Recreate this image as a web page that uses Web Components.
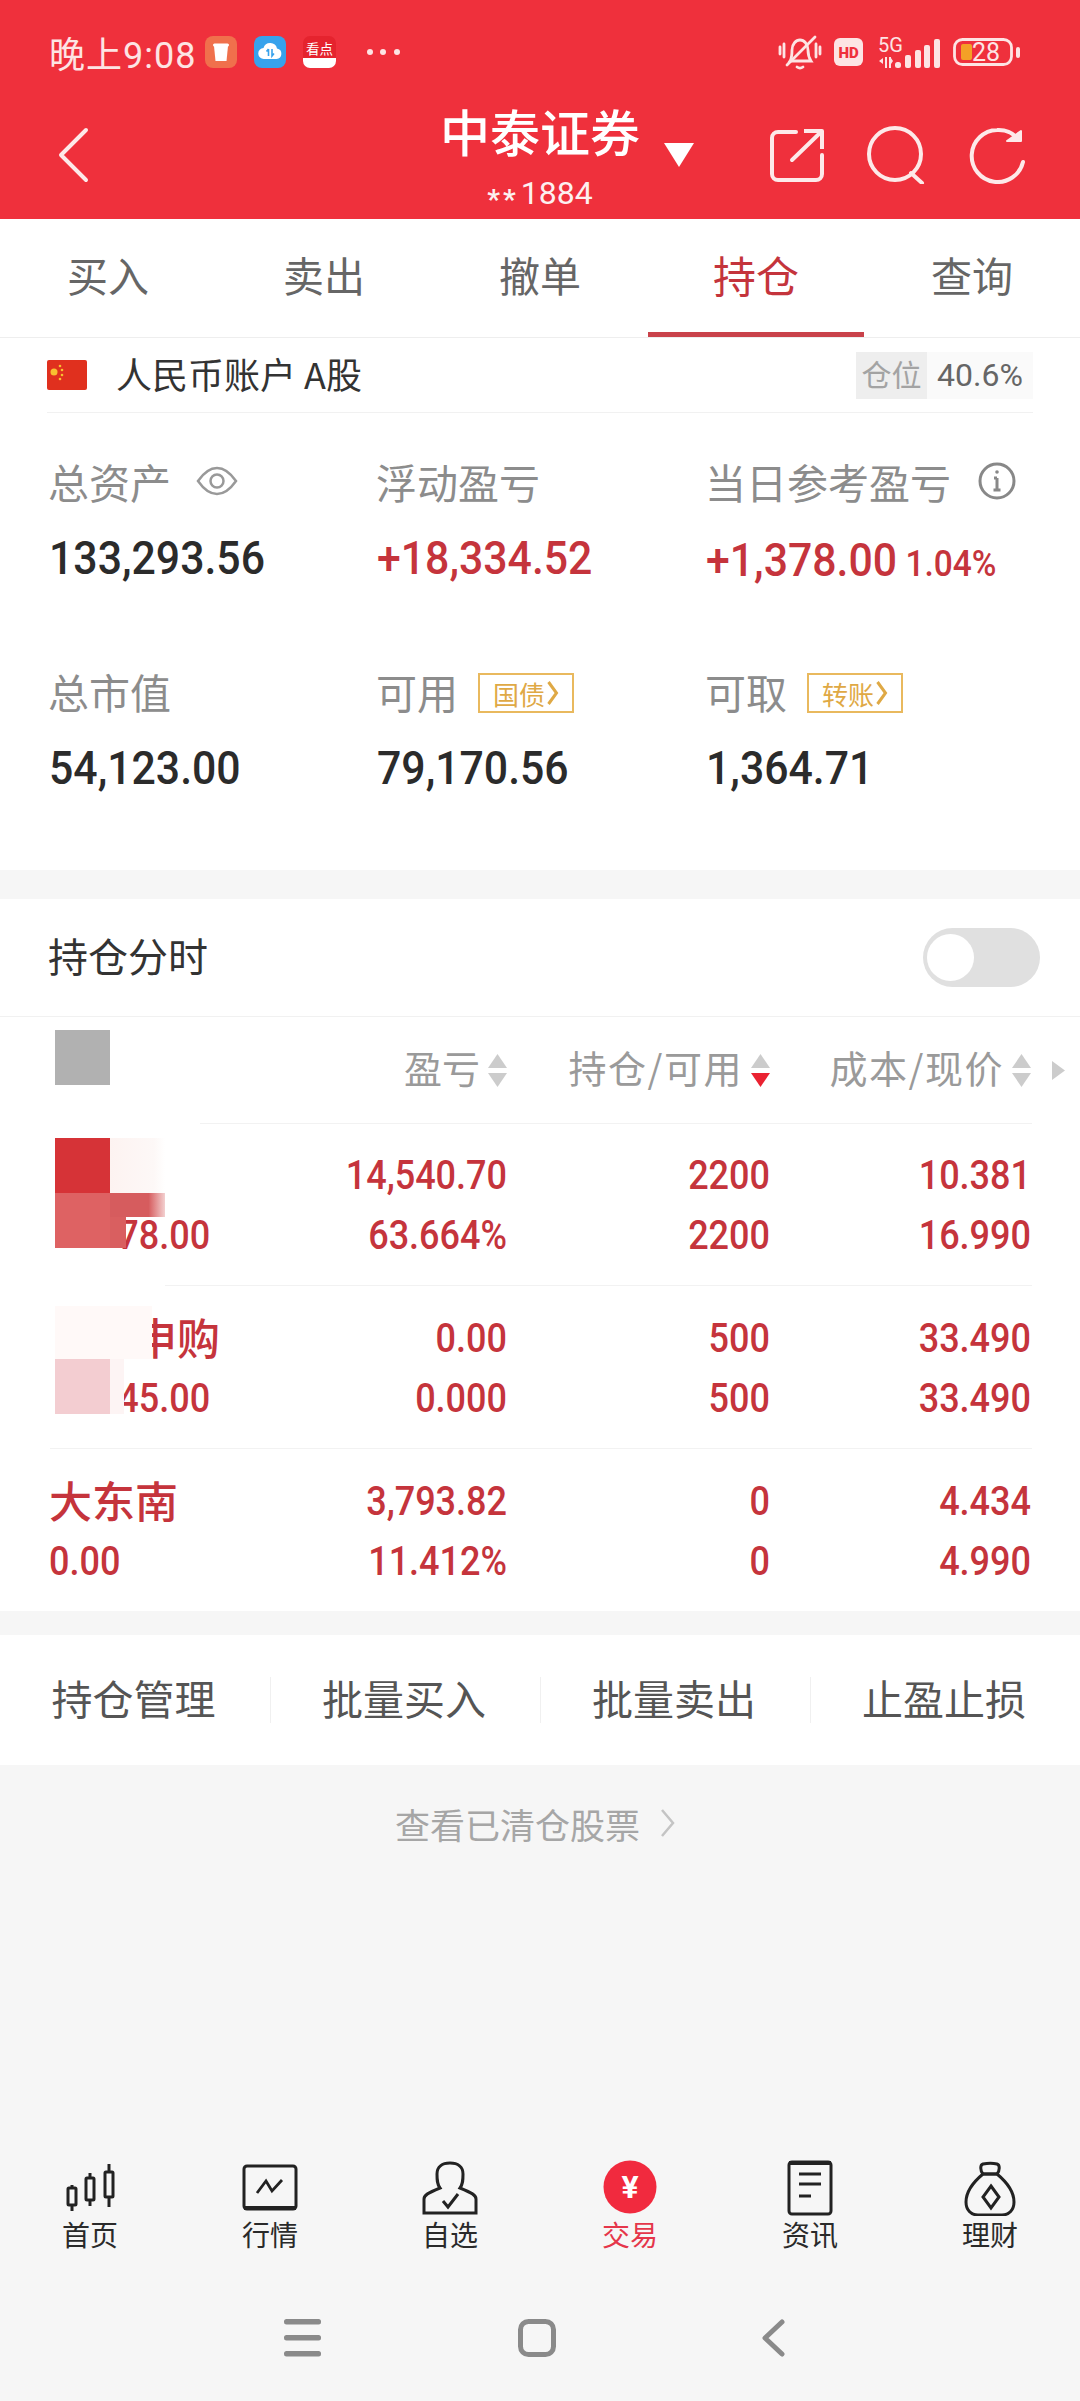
<!DOCTYPE html>
<html lang="zh">
<head>
<meta charset="utf-8">
<title>中泰证券</title>
<style>
  html, body { margin: 0; padding: 0; }
  body {
    background: #f6f6f6;
    font-family: Roboto, "Noto Sans CJK SC", sans-serif;
  }
</style>
</head>
<body>
<trade-page>
  <status-bar></status-bar>
  <app-bar></app-bar>
  <tab-strip>
    <tab-item>买入</tab-item>
    <tab-item>卖出</tab-item>
    <tab-item>撤单</tab-item>
    <tab-item active>持仓</tab-item>
    <tab-item>查询</tab-item>
  </tab-strip>
  <account-row></account-row>
  <stat-grid>
    <stat-cell label="总资产" value="133,293.56">
      <svg slot="extra" width="42" height="32" viewBox="0 0 42 32" fill="none" stroke="#999" stroke-width="2.5" style="margin-left:5px"><path d="M2 16C9 6 15 3 21 3s12 3 19 13c-7 10-13 13-19 13S9 26 2 16z"/><circle cx="21" cy="16" r="6.5"/></svg>
    </stat-cell>
    <stat-cell label="浮动盈亏" value="+18,334.52" red></stat-cell>
    <stat-cell label="当日参考盈亏" value="+1,378.00" pct="1.04%" red>
      <svg slot="extra" width="38" height="38" viewBox="0 0 38 38" fill="none" stroke="#888" stroke-width="3" style="margin-left:7px"><circle cx="19" cy="19" r="17"/><path d="M19 16v12M16 16h3M15.500 28h7"/><circle cx="19" cy="10" r="1.800" fill="#888" stroke="none"/></svg>
    </stat-cell>
    <stat-cell label="总市值" value="54,123.00"></stat-cell>
    <stat-cell label="可用" value="79,170.56"><gold-tag slot="extra">国债</gold-tag></stat-cell>
    <stat-cell label="可取" value="1,364.71"><gold-tag slot="extra">转账</gold-tag></stat-cell>
  </stat-grid>
  <holdings-card>
    <hold-head>
      <mosaic-block style="left:55px;top:13px;width:55px;height:55px;background:#b1b1b1"></mosaic-block>
    </hold-head>
    <hold-row value="78.00" value-indent="77" pl="14,540.70" rate="63.664%" qty="2200" free="2200" cost="10.381" price="16.990" line-from="165">
      <mosaic-block style="left:55px;top:15px;width:55px;height:55px;background:#d63337"></mosaic-block>
      <mosaic-block style="left:110px;top:15px;width:55px;height:55px;background:linear-gradient(90deg,#fdf3f1,#fdf8f7 80%,#fff)"></mosaic-block>
      <mosaic-block style="left:55px;top:70px;width:55px;height:55px;background:#de6263"></mosaic-block>
      <mosaic-block style="left:110px;top:70px;width:55px;height:24px;background:linear-gradient(90deg,#d65c5e,#d65c5e 70%,#f3d0d0)"></mosaic-block>
      <mosaic-block style="left:110px;top:94px;width:16px;height:31px;background:#d95f60"></mosaic-block>
    </hold-row>
    <hold-row name="申购" indent="85" value="45.00" value-indent="77" pl="0.00" rate="0.000" qty="500" free="500" cost="33.490" price="33.490" line-from="50">
      <mosaic-block style="left:55px;top:20px;width:97px;height:53px;background:#fff9f8"></mosaic-block>
      <mosaic-block style="left:55px;top:73px;width:55px;height:55px;background:#f3cdd1"></mosaic-block>
      <mosaic-block style="left:110px;top:73px;width:14px;height:55px;background:#fdf4f4"></mosaic-block>
    </hold-row>
    <hold-row name="大东南" value="0.00" pl="3,793.82" rate="11.412%" qty="0" free="0" cost="4.434" price="4.990" last></hold-row>
  </holdings-card>
  <action-bar>
    <action-item>持仓管理</action-item>
    <action-item>批量买入</action-item>
    <action-item>批量卖出</action-item>
    <action-item>止盈止损</action-item>
  </action-bar>
  <cleared-link></cleared-link>
  <bottom-nav slot="foot">
    <nav-item label="首页">
      <svg width="60" height="56" viewBox="0 0 60 56" fill="none" stroke="#222" stroke-width="3"><rect x="8" y="28" width="8" height="17" rx="1"/><path d="M12 25v3M12 45v6"/><rect x="26" y="18" width="8" height="22" rx="1"/><path d="M30 13v5M30 40v6"/><rect x="45" y="12" width="8" height="25" rx="1"/><path d="M49 4v8M49 37v10"/></svg>
    </nav-item>
    <nav-item label="行情">
      <svg width="60" height="56" viewBox="0 0 60 56" fill="none" stroke="#222" stroke-width="3"><rect x="4" y="6" width="52" height="43" rx="3"/><path d="M4 48h52" stroke-width="4"/><path d="M17 33l9-12 6 10 10-11" stroke-width="2.8"/></svg>
    </nav-item>
    <nav-item label="自选">
      <svg width="60" height="56" viewBox="0 0 60 56" fill="none" stroke="#222" stroke-width="3"><path d="M4 53V39c0-4 4-6 16-11-3-4-3-8-3-14C17 7 22 3 30 3s13 4 13 11c0 6 0 10-3 14 12 5 16 7 16 11v14z"/><path d="M23 41l5 6 10-13"/></svg>
    </nav-item>
    <nav-item label="交易" active>
      <svg width="60" height="56" viewBox="0 0 60 56"><circle cx="30" cy="27" r="26.5" fill="#f12a3e"/><text x="30" y="38" text-anchor="middle" fill="#fff" font-size="32" font-weight="700" font-family="Roboto, sans-serif">¥</text></svg>
    </nav-item>
    <nav-item label="资讯">
      <svg width="60" height="56" viewBox="0 0 60 56" fill="none" stroke="#222" stroke-width="3"><rect x="9" y="2" width="42" height="52" rx="3"/><path d="M9 3h42" stroke-width="4"/><path d="M19 14h22M19 24h22M19 36h12"/></svg>
    </nav-item>
    <nav-item label="理财">
      <svg width="60" height="56" viewBox="0 0 60 56" fill="none" stroke="#222" stroke-width="3"><path d="M23 14C11 24 6 33 6 42c0 8 5 13 12 13h24c7 0 12-5 12-13 0-9-5-18-17-28z"/><path d="M23 14c-3-4-3-9 0-10 5-1 10-1 14 0 3 1 3 6 0 10z"/><path d="M31 26l8 11-8 11-8-11z"/></svg>
    </nav-item>
  </bottom-nav>
  <system-nav slot="foot"></system-nav>
</trade-page>

<script>
class TradePage extends HTMLElement {
  constructor() {
    super();
    this.attachShadow({mode: 'open'});
    this.shadowRoot.innerHTML = `
    <style>
      :host { display: flex; flex-direction: column; min-height: 2401px; }
      #foot { display: block; margin-top: auto; }
    </style>
    <slot></slot>
    <div id="foot"><slot name="foot"></slot></div>`;
  }
}

class StatusBar extends HTMLElement {
  constructor() {
    super();
    this.attachShadow({mode: 'open'});
    this.shadowRoot.innerHTML = `
    <style>
      :host { display: flex; align-items: center; height: 104px; padding: 0 60px 0 49px; box-sizing: border-box; background: #ef303c; color: #fde4e4; }
      #time { font-size: 36px; letter-spacing: 1px; margin-right: 9px; white-space: nowrap; }
      svg { display: block; flex: none; }
      .app { margin-right: 17px; }
      #dots { margin-left: 30px; }
      #right { display: flex; align-items: center; margin-left: auto; }
    </style>
    <span id="time">晚上9:08</span>
    <svg class="app" width="32" height="32" viewBox="0 0 32 32"><rect width="32" height="32" rx="8" fill="#f0704c"/><path d="M9 10h14l-1.500 15h-11z" fill="#fff"/><rect x="8" y="7.500" width="16" height="3" rx="1.500" fill="#fff"/></svg>
    <svg class="app" width="32" height="32" viewBox="0 0 32 32"><rect width="32" height="32" rx="8" fill="#37a2ec"/><path d="M10 23a5.500 5.500 0 0 1-.5-11A7 7 0 0 1 23 12.500 5.300 5.300 0 0 1 22.500 23z" fill="#fff"/><path d="M14.500 13v7M12.500 15.500l2-2.500M18 13v7l2-2.500" stroke="#37a2ec" stroke-width="1.600" fill="none"/></svg>
    <svg class="app" width="33" height="32" viewBox="0 0 33 32" style="margin-right:0"><rect width="33" height="32" rx="7" fill="#e5232e"/><path d="M0 22h33v3a7 7 0 0 1-7 7H7a7 7 0 0 1-7-7z" fill="#fff"/><text x="16.500" y="18" text-anchor="middle" font-size="13.500" fill="#fff" font-family="Noto Sans CJK SC, sans-serif">看点</text></svg>
    <svg id="dots" width="34" height="8" viewBox="0 0 34 8" fill="#fde4e4"><circle cx="4" cy="4" r="3"/><circle cx="17" cy="4" r="3"/><circle cx="31" cy="4" r="3"/></svg>
    <div id="right">
      <svg width="44" height="37" viewBox="0 0 44 37" fill="none" stroke="#fde4e4" stroke-width="2.800" stroke-linecap="round"><path d="M2 13v7M6 10v13M38 10v13M42 13v7"/><path d="M12 27c2-3 2-6 2-11 0-6 4-10 8-10s8 4 8 10c0 5 1 8 3 11z"/><path d="M19 33c2 1.500 4 1.500 6 0"/><path d="M9 31L37 3"/></svg>
      <svg width="29" height="28" viewBox="0 0 29 28" style="margin-left:12px"><rect width="29" height="28" rx="6" fill="#fde4e4"/><text x="14.500" y="19.500" text-anchor="middle" font-size="15" font-weight="900" fill="#ef303c" font-family="Roboto, sans-serif">HD</text></svg>
      <svg width="62" height="43" viewBox="0 -6 62 43" style="margin-left:15px" fill="#fde4e4"><text x="0" y="15" font-size="20" font-family="Roboto, sans-serif">5G</text><rect x="17" y="25" width="6" height="6" rx="2.500"/><rect x="27" y="18" width="6" height="13" rx="2"/><rect x="37" y="13" width="6" height="18" rx="2"/><rect x="46" y="8" width="6" height="23" rx="2"/><rect x="56" y="2" width="6" height="29" rx="2"/><path d="M1 24l4-3v6zM7 20h2v11H7zM11 20h2v11h-2zM15 24l-2-3v6z"/></svg>
      <svg width="67" height="36" viewBox="0 -4 67 36" style="margin-left:13px"><rect x="1.500" y="1.500" width="57" height="25" rx="8" fill="none" stroke="#fde4e4" stroke-width="2.800"/><rect x="8" y="6" width="11" height="16" rx="2" fill="#f4a026"/><text x="19" y="23" font-size="25" fill="#fde4e4" font-family="Roboto, sans-serif">28</text><rect x="63" y="9" width="4" height="11" rx="2" fill="#fde4e4"/></svg>
    </div>`;
  }
}

class AppBar extends HTMLElement {
  constructor() {
    super();
    this.attachShadow({mode: 'open'});
    this.shadowRoot.innerHTML = `
    <style>
      :host { display: grid; grid-template-columns: 1fr auto 1fr; height: 115px; background: #ef303c; color: #fff; box-sizing: border-box; }
      svg { display: block; }
      #back { align-self: center; margin: 0 0 13px 57px; }
      #title { position: relative; text-align: center; }
      #name { font-size: 50px; line-height: 52px; font-weight: 500; font-family: "Noto Sans CJK SC", sans-serif; }
      #sub { font-size: 32px; line-height: 36px; margin-top: 19px; color: #fdf0f0; white-space: nowrap; }
      #sub i { font-style: normal; font-size: 28px; font-weight: 700; letter-spacing: 3px; margin-right: 2px; vertical-align: -5px; }
      #drop { position: absolute; left: 224px; top: 39px; }
      #tools { display: flex; align-items: center; justify-content: flex-end; gap: 42px; padding: 0 54px 13px 0; }
    </style>
    <svg id="back" width="32" height="56" viewBox="0 0 32 56" fill="none" stroke="#fde9e9" stroke-width="4" stroke-linecap="round" stroke-linejoin="round"><path d="M29 3L4 28l25 25"/></svg>
    <div id="title">
      <div id="name">中泰证券</div>
      <div id="sub"><i>**</i>1884</div>
      <svg id="drop" width="30" height="24" viewBox="0 0 30 24"><path d="M0 0h30L15 24z" fill="#fff"/></svg>
    </div>
    <div id="tools">
      <svg width="56" height="56" viewBox="0 0 56 56" fill="none" stroke="#fde9e9" stroke-width="4" stroke-linecap="round" stroke-linejoin="round"><path d="M27 5H9a6 6 0 0 0-6 6v36a6 6 0 0 0 6 6h38a6 6 0 0 0 6-6V28"/><path d="M23 33L52 5"/><path d="M35 4h18v18" stroke-linecap="butt"/></svg>
      <svg width="60" height="58" viewBox="0 0 60 58" fill="none" stroke="#fde9e9" stroke-width="4" stroke-linecap="round"><circle cx="28" cy="28" r="26"/><path d="M44 47l11 10"/></svg>
      <svg width="57" height="57" viewBox="0 0 57 57" fill="none" stroke="#fde9e9" stroke-width="4" stroke-linecap="round"><path d="M50 13A26 26 0 0 0 28 3a26 26 0 1 0 26 32"/><path d="M38 14l14-10v10z" fill="#fde9e9" stroke="#fde9e9" stroke-width="2" stroke-linejoin="round"/></svg>
    </div>`;
  }
}

class TabStrip extends HTMLElement {
  constructor() {
    super();
    this.attachShadow({mode: 'open'});
    this.shadowRoot.innerHTML = `
    <style>
      :host { display: grid; grid-template-columns: repeat(5, 1fr); background: #fff; border-bottom: 1px solid #eee; font-family: "Noto Sans CJK SC", sans-serif; }
    </style>
    <slot></slot>`;
  }
}

class TabItem extends HTMLElement {
  constructor() {
    super();
    this.attachShadow({mode: 'open'});
    this.shadowRoot.innerHTML = `
    <style>
      :host { display: flex; align-items: center; justify-content: center; height: 118px; box-sizing: border-box; padding-bottom: 3px; border-bottom: 5px solid transparent; font-size: 41px; color: #666; }
      :host([active]) { color: #c4343c; border-bottom-color: #c9424a; font-size: 43px; }
    </style>
    <slot></slot>`;
  }
}

class AccountRow extends HTMLElement {
  constructor() {
    super();
    this.attachShadow({mode: 'open'});
    this.shadowRoot.innerHTML = `
    <style>
      :host { display: block; background: #fff; padding: 0 47px; }
      #row { display: flex; align-items: center; height: 74px; border-bottom: 1px solid #f1f1f1; }
      svg { display: block; margin-right: 29px; }
      #text { font-size: 36px; color: #333; font-family: "Noto Sans CJK SC", sans-serif; white-space: nowrap; padding-bottom: 4px; }
      #tag { display: flex; margin-left: auto; height: 47px; width: 177px; background: #fafafa; font-size: 32px; line-height: 47px; }
      #tag b { width: 71px; flex: none; font-weight: 400; font-size: 30px; text-align: center; background: #eee; color: #a3a3a3; font-family: "Noto Sans CJK SC", sans-serif; line-height: 42px; }
      #tag span { flex: 1; text-align: center; color: #666; }
    </style>
    <div id="row">
      <svg width="40" height="30" viewBox="0 0 40 30"><rect width="40" height="30" rx="2" fill="#e0301e"/><circle cx="7" cy="12" r="3.500" fill="#f8c030"/><circle cx="13" cy="6" r="1.300" fill="#f8c030"/><circle cx="15" cy="10" r="1.300" fill="#f8c030"/><circle cx="15" cy="15" r="1.300" fill="#f8c030"/><circle cx="13" cy="19" r="1.300" fill="#f8c030"/></svg>
      <span id="text">人民币账户 A股</span>
      <div id="tag"><b>仓位</b><span>40.6%</span></div>
    </div>`;
  }
}

class StatGrid extends HTMLElement {
  constructor() {
    super();
    this.attachShadow({mode: 'open'});
    this.shadowRoot.innerHTML = `
    <style>
      :host { display: grid; grid-template-columns: 328px 329px 1fr; row-gap: 83px; padding: 43px 0 77px 48px; background: #fff; }
    </style>
    <slot></slot>`;
  }
}

class StatCell extends HTMLElement {
  constructor() {
    super();
    this.attachShadow({mode: 'open'});
    const pct = this.getAttribute('pct');
    this.shadowRoot.innerHTML = `
    <style>
      :host { display: block; }
      #label { display: flex; align-items: center; gap: 20px; height: 50px; font-size: 41px; color: #8c8c8c; white-space: nowrap; font-family: "Noto Sans CJK SC", sans-serif; }
      #value { margin: 27px 0 0 1px; height: 50px; font-size: 46px; line-height: 50px; font-weight: 500; color: #2b2b2b; white-space: nowrap; transform: scaleX(.93); transform-origin: left; }
      :host([red]) #value { color: #c5343c; }
      :host([pct]) #value { margin-top: 29px; height: 48px; }
      #value small { font-size: 36px; margin-left: 9px; }
    </style>
    <div id="label"><span>${this.getAttribute('label')}</span><slot name="extra"></slot></div>
    <div id="value">${this.getAttribute('value')}${pct ? `<small>${pct}</small>` : ''}</div>`;
  }
}

class GoldTag extends HTMLElement {
  constructor() {
    super();
    this.attachShadow({mode: 'open'});
    this.shadowRoot.innerHTML = `
    <style>
      :host { display: inline-flex; align-items: center; justify-content: center; gap: 2px; width: 96px; height: 40px; box-sizing: border-box; border: 2.500px solid #e9b95e; font-size: 26px; color: #dfa945; margin-top: 4px; }
    </style>
    <slot></slot>
    <svg width="12" height="26" viewBox="0 0 12 26" fill="none" stroke="#dfa945" stroke-width="3"><path d="M1.500 2l8 11-8 11"/></svg>`;
  }
}

class HoldingsCard extends HTMLElement {
  constructor() {
    super();
    this.attachShadow({mode: 'open'});
    this.shadowRoot.innerHTML = `
    <style>
      :host { display: block; margin-top: 29px; background: #fff; }
      #top { display: flex; align-items: center; justify-content: space-between; height: 117px; padding: 0 40px 0 48px; border-bottom: 1px solid #f1f1f1; }
      #top span { font-size: 40px; color: #333; font-family: "Noto Sans CJK SC", sans-serif; padding-bottom: 6px; }
      #switch { width: 117px; height: 59px; border-radius: 30px; background: #e0e0e0; padding: 6px 0 0 4px; box-sizing: border-box; }
      #switch i { display: block; width: 47px; height: 47px; border-radius: 50%; background: #fff; }
    </style>
    <div id="top"><span>持仓分时</span><div id="switch"><i></i></div></div>
    <slot></slot>`;
  }
}

class HoldHead extends HTMLElement {
  constructor() {
    super();
    this.attachShadow({mode: 'open'});
    const arrows = (active) => `<svg width="21" height="33" viewBox="0 0 21 33"><path d="M10.500 0L20 14H1z" fill="#ccc"/><path d="M10.500 33L20 19H1z" fill="${active ? '#ea2231' : '#ccc'}"/></svg>`;
    this.shadowRoot.innerHTML = `
    <style>
      :host { display: block; position: relative; height: 106px; }
      #grid { display: grid; grid-template-columns: 458px 263px 261px 48px; height: 106px; margin-left: 50px; align-items: center; font-size: 38px; color: #9a9a9a; font-family: "Noto Sans CJK SC", sans-serif; }
      .c { display: flex; align-items: center; justify-content: flex-end; gap: 7px; white-space: nowrap; }
      .c span { padding-bottom: 7px; }
      .c span.w { letter-spacing: 1.500px; }
      .more { display: flex; justify-content: flex-end; padding-right: 15px; }
      #line { height: 1px; margin: 0 48px 0 200px; background: #f2f2f2; }
    </style>
    <div id="grid">
      <div class="c"><span>盈亏</span>${arrows()}</div>
      <div class="c"><span class="w">持仓/可用</span>${arrows(true)}</div>
      <div class="c"><span class="w">成本/现价</span>${arrows()}</div>
      <div class="more"><svg width="13" height="19" viewBox="0 0 13 19"><path d="M0 0l13 9.500L0 19z" fill="#ccc"/></svg></div>
    </div>
    <div id="line"></div>
    <slot></slot>`;
  }
}

class HoldRow extends HTMLElement {
  constructor() {
    super();
    this.attachShadow({mode: 'open'});
    const a = (n) => this.getAttribute(n) || '';
    const from = a('line-from') || '50';
    this.shadowRoot.innerHTML = `
    <style>
      :host { display: block; position: relative; }
      #grid { display: grid; grid-template-columns: 200px 258px 263px 261px; grid-template-rows: 60px 60px; padding: 23px 0 19px 49px; font-size: 40px; line-height: 60px; font-weight: 500; color: #c5343c; }
      .r { text-align: right; transform: scaleX(.9); transform-origin: right; }
      #name { font-size: 43px; line-height: 54px; font-family: "Noto Sans CJK SC", sans-serif; padding-left: ${a('indent') || 0}px; white-space: nowrap; }
      #val { padding-left: ${a('value-indent') || 0}px; transform: scaleX(.9); transform-origin: left; white-space: nowrap; }
      #line { height: 1px; margin: 0 48px 0 ${from}px; background: #f2f2f2; }
      :host([last]) #line { display: none; }
    </style>
    <div id="grid">
      <div id="name">${a('name')}</div>
      <div class="r">${a('pl')}</div>
      <div class="r">${a('qty')}</div>
      <div class="r">${a('cost')}</div>
      <div id="val">${a('value')}</div>
      <div class="r">${a('rate')}</div>
      <div class="r">${a('free')}</div>
      <div class="r">${a('price')}</div>
    </div>
    <div id="line"></div>
    <slot></slot>`;
  }
}

// 打码色块，盖在股票名称上面
class MosaicBlock extends HTMLElement {
  constructor() {
    super();
    this.attachShadow({mode: 'open'});
    this.shadowRoot.innerHTML = `<style>:host { display: block; position: absolute; }</style>`;
  }
}

class ActionBar extends HTMLElement {
  constructor() {
    super();
    this.attachShadow({mode: 'open'});
    this.shadowRoot.innerHTML = `
    <style>
      :host { display: grid; grid-template-columns: repeat(4, 1fr); align-items: center; height: 130px; margin-top: 24px; background: #fff; font-family: "Noto Sans CJK SC", sans-serif; }
    </style>
    <slot></slot>`;
  }
}

class ActionItem extends HTMLElement {
  constructor() {
    super();
    this.attachShadow({mode: 'open'});
    this.shadowRoot.innerHTML = `
    <style>
      :host { display: flex; align-items: center; justify-content: center; height: 46px; font-size: 41px; color: #555; border-left: 1px solid #f0f0f0; box-sizing: border-box; padding: 0 3px 6px 0; }
      :host(:first-child) { border-left: 0; }
    </style>
    <slot></slot>`;
  }
}

class ClearedLink extends HTMLElement {
  constructor() {
    super();
    this.attachShadow({mode: 'open'});
    this.shadowRoot.innerHTML = `
    <style>
      :host { display: flex; align-items: center; justify-content: center; gap: 20px; height: 46px; padding: 35px 10px 0 0; font-size: 35px; color: #a6a6a6; font-family: "Noto Sans CJK SC", sans-serif; }
    </style>
    <span>查看已清仓股票</span>
    <svg width="15" height="28" viewBox="0 0 15 28" fill="none" stroke="#c4c4c4" stroke-width="2.500"><path d="M2 1l11 13L2 27"/></svg>`;
  }
}

class BottomNav extends HTMLElement {
  constructor() {
    super();
    this.attachShadow({mode: 'open'});
    this.shadowRoot.innerHTML = `
    <style>
      :host { display: grid; grid-template-columns: repeat(6, 180px); height: 115px; }
    </style>
    <slot></slot>`;
  }
}

class NavItem extends HTMLElement {
  constructor() {
    super();
    this.attachShadow({mode: 'open'});
    this.shadowRoot.innerHTML = `
    <style>
      :host { display: flex; flex-direction: column; align-items: center; color: #2a2a2a; }
      :host([active]) { color: #e5364a; }
      #icon { height: 56px; }
      #label { font-size: 28px; line-height: 36px; font-family: "Noto Sans CJK SC", sans-serif; }
    </style>
    <div id="icon"><slot></slot></div>
    <div id="label">${this.getAttribute('label')}</div>`;
  }
}

class SystemNav extends HTMLElement {
  constructor() {
    super();
    this.attachShadow({mode: 'open'});
    this.shadowRoot.innerHTML = `
    <style>
      :host { display: flex; align-items: center; justify-content: center; height: 126px; padding-right: 11px; }
      svg { display: block; }
    </style>
    <svg width="37" height="38" viewBox="0 0 37 38" fill="#8a8a8a"><rect width="37" height="5.500" rx="2.500"/><rect y="16" width="37" height="5.500" rx="2.500"/><rect y="32" width="37" height="5.500" rx="2.500"/></svg>
    <svg width="38" height="38" viewBox="0 0 38 38" fill="none" stroke="#8a8a8a" stroke-width="5" style="margin-left:197px"><rect x="2.500" y="2.500" width="33" height="33" rx="8"/></svg>
    <svg width="23" height="38" viewBox="0 0 23 38" fill="none" stroke="#8a8a8a" stroke-width="5" stroke-linecap="round" stroke-linejoin="round" style="margin-left:206px"><path d="M20 3L3 19l17 16"/></svg>`;
  }
}

customElements.define('trade-page', TradePage);
customElements.define('status-bar', StatusBar);
customElements.define('app-bar', AppBar);
customElements.define('tab-strip', TabStrip);
customElements.define('tab-item', TabItem);
customElements.define('account-row', AccountRow);
customElements.define('stat-grid', StatGrid);
customElements.define('stat-cell', StatCell);
customElements.define('gold-tag', GoldTag);
customElements.define('holdings-card', HoldingsCard);
customElements.define('hold-head', HoldHead);
customElements.define('hold-row', HoldRow);
customElements.define('mosaic-block', MosaicBlock);
customElements.define('action-bar', ActionBar);
customElements.define('action-item', ActionItem);
customElements.define('cleared-link', ClearedLink);
customElements.define('bottom-nav', BottomNav);
customElements.define('nav-item', NavItem);
customElements.define('system-nav', SystemNav);
</script>
</body>
</html>
